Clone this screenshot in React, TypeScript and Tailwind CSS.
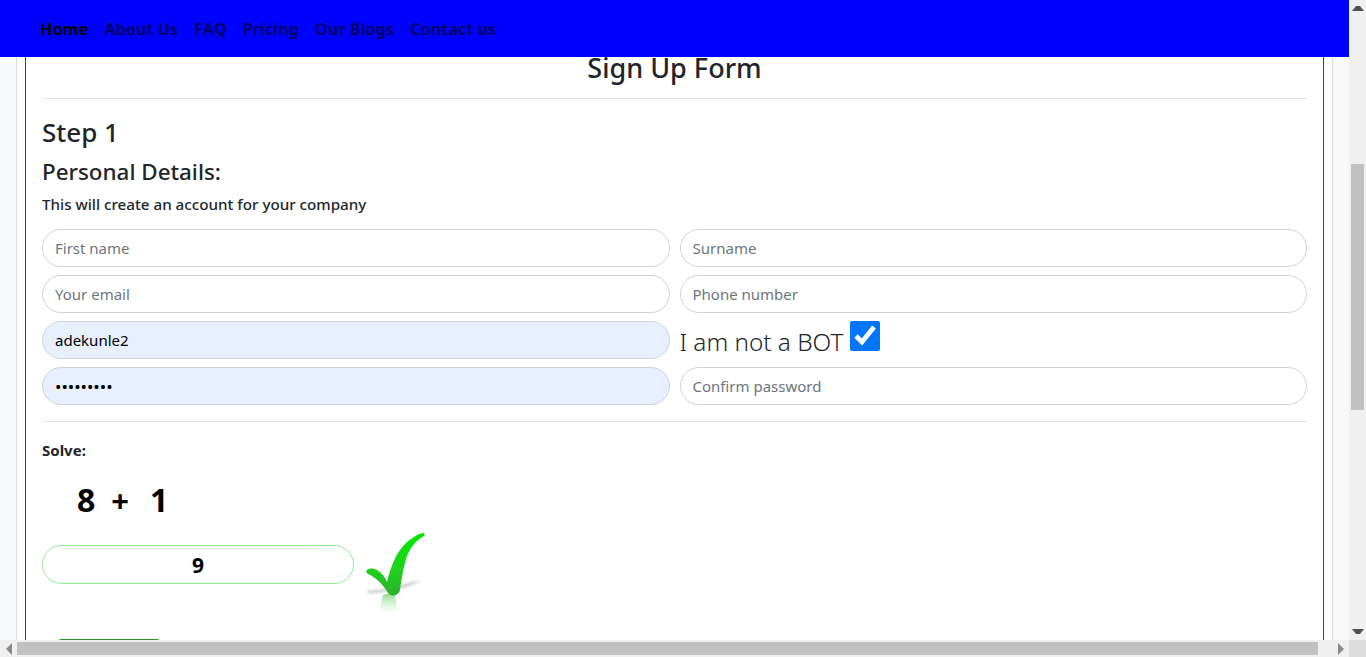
import React from 'react';

function TextField({ placeholder, value, type = 'text', filled = false }: { placeholder?: string; value?: string; type?: string; filled?: boolean }) {
  return (
    <input
      type={type}
      placeholder={placeholder}
      defaultValue={value}
      className={
        filled
          ? type === 'password'
            ? 'h-[38px] w-full rounded-full border border-[#ced4da] bg-[#e8f0fe] px-3 text-[17px] text-black outline-none'
            : 'h-[38px] w-full rounded-full border border-[#ced4da] bg-[#e8f0fe] px-3 text-[15px] text-black outline-none'
          : 'h-[38px] w-full rounded-full border border-[#ced4da] bg-white px-3 text-[15px] text-black outline-none placeholder:text-[#6c757d]'
      }
    />
  );
}

function GreenCheck() {
  return (
    <svg width="62" height="84" viewBox="0 0 62 84" className="shrink-0">
      <defs>
        <linearGradient id="tick" x1="0" y1="0" x2="0" y2="1">
          <stop offset="0" stopColor="#00e800" />
          <stop offset="0.6" stopColor="#1fd01f" />
          <stop offset="1" stopColor="#2db02d" />
        </linearGradient>
        <linearGradient id="reflect" x1="0" y1="0" x2="0" y2="1">
          <stop offset="0" stopColor="#5fc85f" stopOpacity="0.7" />
          <stop offset="1" stopColor="#c8f0c8" stopOpacity="0" />
        </linearGradient>
        <filter id="blur"><feGaussianBlur stdDeviation="1.4" /></filter>
      </defs>
      <path d="M4 61 C 20 61, 44 55, 57 49 C 48 49, 30 58, 4 59 Z" fill="#8a8a8a" opacity="0.6" filter="url(#blur)" />
      <path d="M19 63 Q 25 60 31 63 L 34 82 L 14 82 Z" fill="url(#reflect)" />
      <path
        d="M3 38 C 5 36, 9 36, 13 38 C 18 41, 21 45, 23 50 C 26 36, 32 21, 41 12 C 47 6, 54 2, 59 1 C 61 1, 61 3, 60 4 C 51 9, 45 17, 42 27 C 39 38, 37 50, 36 58 C 35 64, 27 65, 24 61 C 19 52, 11 45, 4 42 C 2 41, 2 39, 3 38 Z"
        fill="url(#tick)"
      />
    </svg>
  );
}

function Arrow({ dir }: { dir: 'up' | 'down' | 'left' | 'right' }) {
  const points = { up: '0,6 4,1 8,1 12,6', down: '0,1 12,1 8,6 4,6', left: '1,6 7,0 7,12', right: '1,0 7,6 1,12' }[dir];
  const horizontal = dir === 'left' || dir === 'right';
  return (
    <svg width={horizontal ? 8 : 12} height={horizontal ? 12 : 7} viewBox={horizontal ? '0 0 8 12' : '0 0 12 7'}>
      <polygon points={points} fill={horizontal ? '#8a8a8a' : '#505050'} />
    </svg>
  );
}

export default function App() {
  const links = ['About Us', 'FAQ', 'Pricing', 'Our Blogs', 'Contact us'];

  return (
    <div className="flex h-[657px] w-[1366px] flex-col overflow-hidden bg-[#f8f9fa] font-['Noto_Sans',sans-serif] text-[#212529]">
      <div className="flex min-h-0 flex-1">
        <div className="flex min-w-0 flex-1 flex-col">
          <nav className="relative z-10 flex h-[57px] shrink-0 items-center gap-4 bg-[#0000ff] pl-10 pt-[2px] text-[16.25px] font-bold text-black/60">
            <a className="text-black">Home</a>
            {links.map((l) => (
              <a key={l}>{l}</a>
            ))}
          </nav>

          <main className="min-h-0 flex-1 overflow-hidden px-4">
            <div className="h-full border-x border-[#dcdcdc] bg-white px-2">
              <div className="h-full border-x border-[#0b6b0b] px-4">
                <h3 className="border-b border-[#e5e5e5] pb-[20px] text-center text-[27px] font-medium leading-[21px]">Sign Up Form</h3>
                <h3 className="mt-[12px] text-[26px] font-medium leading-[43px]">Step 1</h3>
                <h4 className="text-[22.4px] font-medium leading-[36px]">Personal Details:</h4>
                <p className="mt-[2px] text-[15.2px] font-medium leading-[24px]">This will create an account for your company</p>

                <div className="mt-[13px] grid grid-cols-2 gap-x-[10px] gap-y-2">
                  <TextField placeholder="First name" />
                  <TextField placeholder="Surname" />
                  <TextField placeholder="Your email" />
                  <TextField placeholder="Phone number" />
                  <TextField value="adekunle2" filled />
                  <label className="flex h-[38px] items-start gap-[7px]">
                    <span className="mt-[4px] text-[24.3px] leading-[34px] font-light">I am not a BOT</span>
                    <input type="checkbox" defaultChecked className="m-0 h-[30px] w-[30px] accent-[#0075ff]" />
                  </label>
                  <TextField value="adekunle2" type="password" filled />
                  <TextField placeholder="Confirm password" />
                </div>

                <hr className="mt-4 border-[#e5e5e5]" />

                <p className="mt-[16px] text-[15px] font-bold leading-[24px]">Solve:</p>
                <div className="mt-[18px] flex h-[40px] items-center pl-[35px] text-[32px] font-bold leading-none text-black">
                  <span>8</span>
                  <span className="ml-[16px] text-[31px]">+</span>
                  <span className="ml-[21px]">1</span>
                </div>

                <div className="mt-[12px] flex items-start gap-[10px]">
                  <input
                    defaultValue="9"
                    className="mt-[13px] h-[39px] w-[312px] rounded-full border border-[#90ee90] bg-white text-center text-[21px] font-bold text-black outline-none"
                  />
                  <GreenCheck />
                </div>

                <div className="ml-[12px] mt-[23px] h-10 w-[110px] rounded-t-[8px] border-t border-[#2e8b2e] bg-white" />
              </div>
            </div>
          </main>
        </div>

        <div className="flex w-[17px] shrink-0 flex-col items-center bg-[#f0f0f0]">
          <div className="flex h-[17px] items-center justify-center"><Arrow dir="up" /></div>
          <div className="mt-[147px] h-[246px] w-[13px] bg-[#c1c1c1]" />
          <div className="flex-1" />
          <div className="flex h-[17px] items-center justify-center"><Arrow dir="down" /></div>
        </div>
      </div>

      <div className="flex h-[17px] shrink-0 items-center bg-[#f0f0f0]">
        <div className="flex w-[17px] items-center justify-center"><Arrow dir="left" /></div>
        <div className="h-[13px] w-[1301px] bg-[#c1c1c1]" />
        <div className="flex flex-1 items-center justify-center pl-[14px]"><Arrow dir="right" /></div>
        <div className="h-[17px] w-[17px] bg-[#dcdcdc]" />
      </div>
    </div>
  );
}
